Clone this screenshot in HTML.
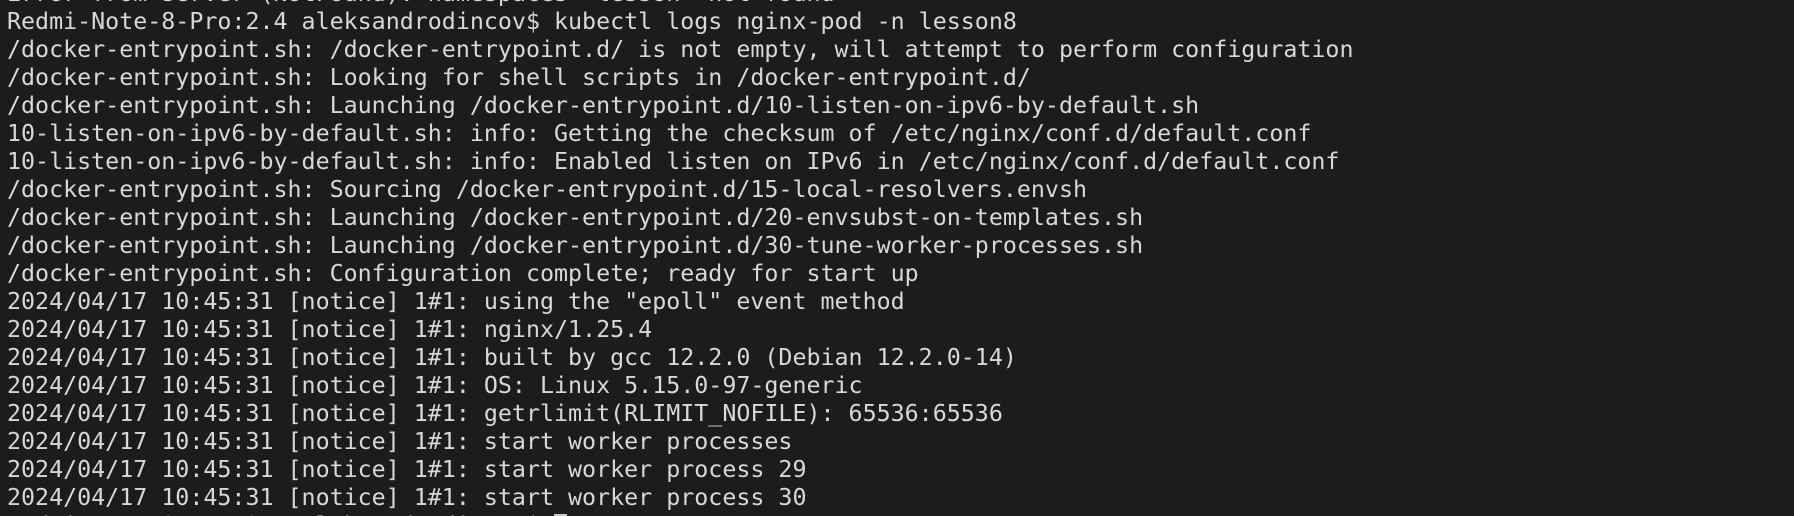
<!DOCTYPE html>
<html><head><meta charset="utf-8"><style>
html,body{margin:0;padding:0;background:#1c1c1c;width:1794px;height:516px;overflow:hidden}
#w{position:relative;width:1794px;height:516px;overflow:hidden;background:#1c1c1c}
pre{position:absolute;left:7px;top:-20px;margin:0;font-family:"DejaVu Sans Mono","Liberation Mono",monospace;font-size:23.3px;line-height:28px;color:#d8d8d8;white-space:pre}
.cur{display:inline-block;width:13px;height:24px;background:#c8c8c8;vertical-align:-5px}
</style></head><body><div id="w"><pre>Error from server (NotFound): namespaces "lesson" not found
Redmi-Note-8-Pro:2.4 aleksandrodincov$ kubectl logs nginx-pod -n lesson8
/docker-entrypoint.sh: /docker-entrypoint.d/ is not empty, will attempt to perform configuration
/docker-entrypoint.sh: Looking for shell scripts in /docker-entrypoint.d/
/docker-entrypoint.sh: Launching /docker-entrypoint.d/10-listen-on-ipv6-by-default.sh
10-listen-on-ipv6-by-default.sh: info: Getting the checksum of /etc/nginx/conf.d/default.conf
10-listen-on-ipv6-by-default.sh: info: Enabled listen on IPv6 in /etc/nginx/conf.d/default.conf
/docker-entrypoint.sh: Sourcing /docker-entrypoint.d/15-local-resolvers.envsh
/docker-entrypoint.sh: Launching /docker-entrypoint.d/20-envsubst-on-templates.sh
/docker-entrypoint.sh: Launching /docker-entrypoint.d/30-tune-worker-processes.sh
/docker-entrypoint.sh: Configuration complete; ready for start up
2024/04/17 10:45:31 [notice] 1#1: using the "epoll" event method
2024/04/17 10:45:31 [notice] 1#1: nginx/1.25.4
2024/04/17 10:45:31 [notice] 1#1: built by gcc 12.2.0 (Debian 12.2.0-14)
2024/04/17 10:45:31 [notice] 1#1: OS: Linux 5.15.0-97-generic
2024/04/17 10:45:31 [notice] 1#1: getrlimit(RLIMIT_NOFILE): 65536:65536
2024/04/17 10:45:31 [notice] 1#1: start worker processes
2024/04/17 10:45:31 [notice] 1#1: start worker process 29
2024/04/17 10:45:31 [notice] 1#1: start worker process 30
Redmi-Note-8-Pro:2.4 aleksandrodincov$ <span class="cur"></span></pre></div></body></html>
